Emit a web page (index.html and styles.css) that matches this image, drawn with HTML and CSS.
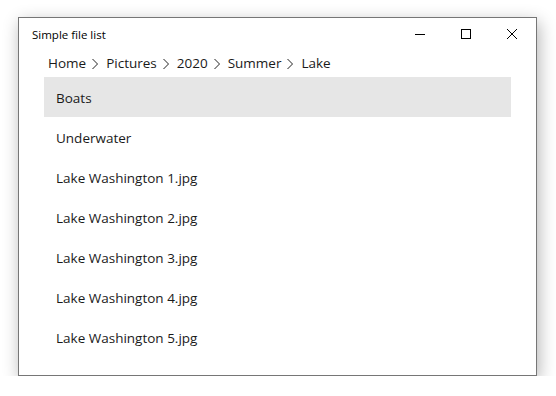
FILE: index.html
```html
<!DOCTYPE html>
<html lang="en">
<head>
    <meta charset="UTF-8">
    <title>Simple file list</title>
    <link rel="stylesheet" href="styles.css">
</head>
<body>
    <div class="window">
        <div class="titlebar">
            <span class="title">Simple file list</span>
            <div class="caption-buttons">
                <span class="caption-btn">
                    <svg width="10" height="10" viewBox="0 0 10 10"><path d="M0 5.5h10" stroke="#000" stroke-width="1"/></svg>
                </span>
                <span class="caption-btn">
                    <svg width="10" height="10" viewBox="0 0 10 10"><rect x="0.5" y="0.5" width="9" height="9" fill="none" stroke="#000" stroke-width="1"/></svg>
                </span>
                <span class="caption-btn">
                    <svg width="10" height="10" viewBox="0 0 10 10"><path d="M0 0L10 10M10 0L0 10" stroke="#000" stroke-width="1"/></svg>
                </span>
            </div>
        </div>

        <div class="breadcrumb">
            <span class="crumb">Home</span>
            <svg class="chevron" width="8" height="12" viewBox="0 0 8 12"><path d="M1.5 1l5 5-5 5" fill="none" stroke="#222" stroke-width="1"/></svg>
            <span class="crumb">Pictures</span>
            <svg class="chevron" width="8" height="12" viewBox="0 0 8 12"><path d="M1.5 1l5 5-5 5" fill="none" stroke="#222" stroke-width="1"/></svg>
            <span class="crumb">2020</span>
            <svg class="chevron" width="8" height="12" viewBox="0 0 8 12"><path d="M1.5 1l5 5-5 5" fill="none" stroke="#222" stroke-width="1"/></svg>
            <span class="crumb">Summer</span>
            <svg class="chevron" width="8" height="12" viewBox="0 0 8 12"><path d="M1.5 1l5 5-5 5" fill="none" stroke="#222" stroke-width="1"/></svg>
            <span class="crumb">Lake</span>
        </div>

        <ul class="file-list">
            <li class="selected">Boats</li>
            <li>Underwater</li>
            <li>Lake Washington 1.jpg</li>
            <li>Lake Washington 2.jpg</li>
            <li>Lake Washington 3.jpg</li>
            <li>Lake Washington 4.jpg</li>
            <li>Lake Washington 5.jpg</li>
        </ul>
    </div>
</body>
</html>
```

FILE: styles.css
```css
body {
    margin: 0;
    padding: 17px 0 0 18px;
    background: #fff;
    font-family: "Open Sans", "Noto Sans", sans-serif;
    color: #1a1a1a;
}
.window {
    width: 517px;
    height: 357px;
    background: #fff;
    border: 1px solid #767676;
    box-shadow: 2px 5px 16px rgba(0, 0, 0, 0.3);
}
.titlebar {
    display: flex;
    justify-content: space-between;
    align-items: center;
    height: 31px;
}
.title {
    font-size: 11.5px;
    padding-left: 13px;
    padding-top: 1px;
    color: #000;
}
.caption-buttons {
    display: flex;
    padding-right: 1px;
}
.caption-btn {
    display: flex;
    width: 46px;
    justify-content: center;
}
.caption-btn:first-child {
    width: 26px;
    margin-right: 10px;
}
.breadcrumb {
    display: flex;
    align-items: center;
    height: 28px;
    padding-left: 29px;
    font-size: 13.5px;
    color: #1a1a1a;
}
.chevron {
    margin: 1px 7px 0 5px;
}
.file-list {
    list-style: none;
    margin: 0 25px 0 25px;
    padding: 0;
}
.file-list li {
    height: 40px;
    line-height: 42px;
    padding-left: 12px;
    font-size: 13.5px;
}
.file-list li.selected {
    background: #e6e6e6;
}
```
